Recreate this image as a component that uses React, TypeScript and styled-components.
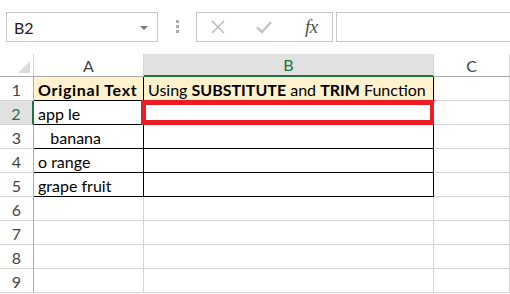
import React from 'react';
import styled, { createGlobalStyle } from 'styled-components';

const GlobalStyle = createGlobalStyle`
  html, body {
    margin: 0;
    padding: 0;
    background: #ffffff;
  }
  body {
    font-family: Lato, "Noto Sans", sans-serif;
    overflow: hidden;
  }
`;

const Window = styled.div`
  width: 510px;
  height: 294px;
  overflow: hidden;
  background: #ffffff;
`;

const FormulaBar = styled.div`
  display: flex;
  align-items: flex-start;
  height: 54px;
  padding: 12px 0 0 6px;
  box-sizing: border-box;
`;

const NameBox = styled.div`
  width: 152px;
  height: 30px;
  box-sizing: border-box;
  border: 1px solid #c6c6c6;
  display: flex;
  align-items: center;
  justify-content: space-between;
  padding: 0 9px 0 7px;
  font-size: 16px;
  color: #222;
`;

const DropArrow = styled.span`
  width: 0;
  height: 0;
  border-left: 4px solid transparent;
  border-right: 4px solid transparent;
  border-top: 4px solid #777;
  margin-top: 2px;
`;

const Grip = styled.div`
  display: flex;
  flex-direction: column;
  gap: 2px;
  margin: 8px 17px 0 18px;
  span {
    width: 3px;
    height: 3px;
    background: #adadad;
  }
`;

const ButtonBox = styled.div`
  width: 137px;
  height: 30px;
  box-sizing: border-box;
  border: 1px solid #c6c6c6;
  display: flex;
  align-items: center;
  padding-left: 13px;
`;

const IconSlot = styled.div<{ $w: number }>`
  width: ${(p) => p.$w}px;
  display: flex;
  align-items: center;
`;

const Fx = styled.span`
  font-family: "Liberation Serif", "DejaVu Serif", serif;
  font-style: italic;
  font-size: 19px;
  color: #505050;
  letter-spacing: -0.5px;
  margin-left: 7px;
`;

const FormulaInput = styled.div`
  flex: 1;
  height: 30px;
  margin-left: 3px;
  margin-right: -4px;
  box-sizing: border-box;
  border: 1px solid #c6c6c6;
`;

const Grid = styled.div`
  display: grid;
  grid-template-columns: 34px 110px 290px 1fr;
  grid-template-rows: 23px repeat(9, 24px);
`;

const Corner = styled.div`
  position: relative;
  border-right: 1px solid #d4d4d4;
  border-bottom: 1px solid #ababab;
  box-sizing: border-box;
  &::after {
    content: '';
    position: absolute;
    right: 3px;
    bottom: 3px;
    width: 0;
    height: 0;
    border-left: 12px solid transparent;
    border-bottom: 12px solid #dcdcdc;
  }
`;

const ColHeader = styled.div<{ $active?: boolean }>`
  box-sizing: border-box;
  display: flex;
  align-items: center;
  justify-content: center;
  font-size: 16px;
  background: ${(p) => (p.$active ? '#e1e1e1' : '#ffffff')};
  color: ${(p) => (p.$active ? '#217346' : '#444')};
  border-right: 1px solid #d4d4d4;
  border-bottom: ${(p) => (p.$active ? '2px solid #217346' : '1px solid #ababab')};
`;

const RowHeader = styled.div<{ $active?: boolean }>`
  box-sizing: border-box;
  display: flex;
  align-items: center;
  justify-content: center;
  font-size: 16px;
  padding-top: 1px;
  background: ${(p) => (p.$active ? '#e1e1e1' : '#ffffff')};
  color: ${(p) => (p.$active ? '#217346' : '#444')};
  border-bottom: 1px solid #d4d4d4;
  border-right: ${(p) => (p.$active ? '2px solid #217346' : '1px solid #ababab')};
`;

const Cell = styled.div<{ $table?: boolean; $head?: boolean; $selected?: boolean; $bold?: boolean }>`
  position: relative;
  box-sizing: border-box;
  display: flex;
  align-items: center;
  padding: 1px 4px 0;
  font-size: 16px;
  color: #000;
  white-space: pre;
  overflow: visible;
  font-weight: ${(p) => (p.$bold ? 700 : 400)};
  letter-spacing: ${(p) => (p.$bold ? '0.7px' : '0')};
  background: ${(p) => (p.$head ? '#fff2cc' : '#ffffff')};
  border-right: 1px solid ${(p) => (p.$table ? '#000' : '#d4d4d4')};
  border-bottom: 1px solid ${(p) => (p.$table ? '#000' : '#d4d4d4')};
  b {
    font-weight: 700;
  }
  ${(p) =>
    p.$selected &&
    `
    &::after {
      content: '';
      position: absolute;
      left: -3px;
      top: -1px;
      right: -2px;
      bottom: -1px;
      border: 5px solid #ed1c24;
    }
  `}
`;

const items = ['app le', '   banana', 'o range', 'grape fruit'];

const XIcon = () => (
  <svg width="16" height="16" viewBox="0 0 16 16">
    <path d="M2 2 L14 14 M14 2 L2 14" stroke="#b4b4b4" strokeWidth="1.4" fill="none" />
  </svg>
);

const CheckIcon = () => (
  <svg width="18" height="16" viewBox="0 0 18 16">
    <path d="M2 8.5 L7 13 L16 3" stroke="#c4c4c4" strokeWidth="2.4" fill="none" />
  </svg>
);

const App: React.FC = () => {
  const rows = Array.from({ length: 9 }, (_, i) => i + 1);
  return (
    <Window>
      <GlobalStyle />
      <FormulaBar>
        <NameBox>
          B2
          <DropArrow />
        </NameBox>
        <Grip>
          <span />
          <span />
          <span />
        </Grip>
        <ButtonBox>
          <IconSlot $w={45}>
            <XIcon />
          </IconSlot>
          <IconSlot $w={43}>
            <CheckIcon />
          </IconSlot>
          <IconSlot $w={30}>
            <Fx>fx</Fx>
          </IconSlot>
        </ButtonBox>
        <FormulaInput />
      </FormulaBar>
      <Grid>
        <Corner />
        <ColHeader>A</ColHeader>
        <ColHeader $active>B</ColHeader>
        <ColHeader>C</ColHeader>
        {rows.map((r) => {
          const inTable = r <= 5;
          if (r === 1) {
            return (
              <React.Fragment key={r}>
                <RowHeader>{r}</RowHeader>
                <Cell $table $head $bold>
                  Original Text
                </Cell>
                <Cell $table $head>
                  Using <b>SUBSTITUTE</b> and <b>TRIM</b> Function
                </Cell>
                <Cell />
              </React.Fragment>
            );
          }
          return (
            <React.Fragment key={r}>
              <RowHeader $active={r === 2}>{r}</RowHeader>
              <Cell $table={inTable}>{inTable ? items[r - 2] : ''}</Cell>
              <Cell $table={inTable} $selected={r === 2} />
              <Cell />
            </React.Fragment>
          );
        })}
      </Grid>
    </Window>
  );
};

export default App;
